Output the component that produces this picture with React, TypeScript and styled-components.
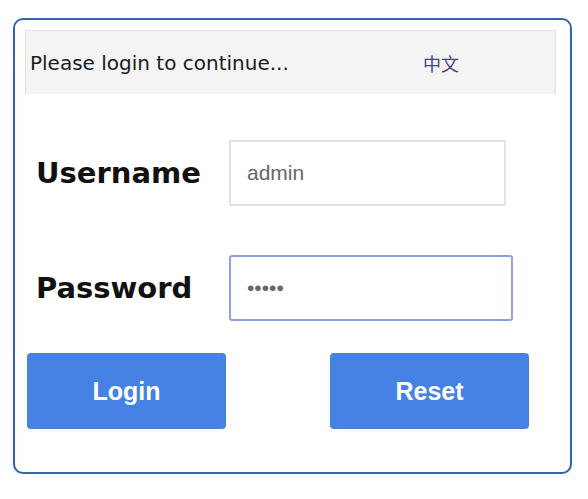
import React from "react";
import styled, { createGlobalStyle } from "styled-components";

const Global = createGlobalStyle`
  html, body { margin: 0; padding: 0; background: #ffffff; }
  body { font-family: "DejaVu Sans", sans-serif; }
`;

const Card = styled.div`
  box-sizing: border-box;
  margin: 18px 0 0 13px;
  width: 559px;
  height: 456px;
  border: 2px solid #3466ab;
  border-radius: 10px;
  padding: 10px 14px 0 10px;
  background: #fff;
  box-shadow: 0 2px 3px rgba(0, 0, 0, 0.08);
`;

const Header = styled.div`
  box-sizing: border-box;
  height: 64px;
  background: #f4f4f4;
  border: 1px solid #e0e0e0;
  border-bottom: none;
  display: grid;
  grid-template-columns: 393px auto;
  align-items: center;
  padding-left: 4px;
`;

const Notice = styled.span`
  font-family: "DejaVu Sans", sans-serif;
  font-size: 20px;
  color: #1a1a1a;
  white-space: nowrap;
`;

const LangLink = styled.a`
  font-family: "Noto Sans CJK SC", sans-serif;
  font-size: 18px;
  color: #44447e;
  text-decoration: none;
  cursor: pointer;
`;

const Form = styled.form`
  margin-top: 46px;
  display: flex;
  flex-direction: column;
`;

const Row = styled.div<{ $gap: number }>`
  display: grid;
  grid-template-columns: 193px auto;
  align-items: center;
  padding-left: 11px;
  margin-bottom: ${(p) => p.$gap}px;
`;

const Label = styled.label`
  font-family: "DejaVu Sans", sans-serif;
  font-weight: bold;
  font-size: 29px;
  color: #111;
`;

const Input = styled.input<{ $w: number; $focus?: boolean }>`
  box-sizing: border-box;
  width: ${(p) => p.$w}px;
  height: 66px;
  border: ${(p) => (p.$focus ? "2px solid #8ea2e4" : "2px solid #e2e2e2")};
  border-radius: ${(p) => (p.$focus ? "3px" : "0")};
  padding: 0 0 0 16px;
  font-family: "Liberation Sans", sans-serif;
  font-size: 21px;
  color: #666;
  background: #fff;
  outline: none;
`;

const Actions = styled.div`
  display: flex;
  gap: 104px;
  padding-left: 2px;
`;

const Button = styled.button`
  width: 199px;
  height: 76px;
  border: none;
  border-radius: 4px;
  background: #4681e4;
  color: #fff;
  font-family: "Liberation Sans", sans-serif;
  font-weight: bold;
  font-size: 25px;
  cursor: pointer;
`;

export default function App() {
  return (
    <>
      <Global />
      <Card>
        <Header>
          <Notice>Please login to continue...</Notice>
          <LangLink>中文</LangLink>
        </Header>
        <Form onSubmit={(e) => e.preventDefault()}>
          <Row $gap={49}>
            <Label htmlFor="u">Username</Label>
            <Input id="u" $w={277} defaultValue="admin" />
          </Row>
          <Row $gap={32}>
            <Label htmlFor="p">Password</Label>
            <Input id="p" type="password" $w={284} $focus defaultValue="admin" />
          </Row>
          <Actions>
            <Button type="submit">Login</Button>
            <Button type="reset">Reset</Button>
          </Actions>
        </Form>
      </Card>
    </>
  );
}
